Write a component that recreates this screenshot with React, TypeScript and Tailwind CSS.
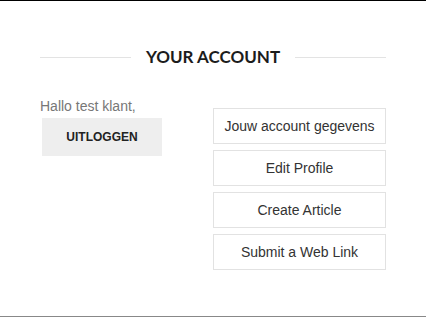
import React from "react";

export default function App() {
  const links = ["Jouw account gegevens", "Edit Profile", "Create Article", "Submit a Web Link"];
  return (
    <div className="w-[426px] h-[317px] bg-white border-t border-t-black border-b border-b-[#888888] box-border" style={{ fontFamily: '"Liberation Sans", Arial, sans-serif' }}>
      <div className="px-[40px] pt-[44px]">
        <div className="flex items-center">
          <div className="flex-1 h-px bg-[#e3e3e3] mt-[1px]" />
          <h2 className="px-[15px] text-[17px] leading-[24px] font-bold text-[#1c1c1c]" style={{ fontFamily: 'Lato, sans-serif' }}>
            YOUR ACCOUNT
          </h2>
          <div className="flex-1 h-px bg-[#e3e3e3] mt-[1px]" />
        </div>
        <div className="flex justify-between mt-[27px]">
          <div className="flex flex-col items-start">
            <div className="text-[14px] leading-[20px] text-[#777777]">Hallo test klant,</div>
            <button className="ml-[2px] mt-[2px] w-[120px] h-[38px] bg-[#eeeeee] text-[12px] font-bold text-[#222222] flex items-center justify-center">
              UITLOGGEN
            </button>
          </div>
          <div className="mt-[12px] flex flex-col gap-[6px] w-[173px]">
            {links.map((l) => (
              <div key={l} className="h-[36px] border border-[#e2e2e2] flex items-center justify-center text-[14px] text-[#333333]">
                {l}
              </div>
            ))}
          </div>
        </div>
      </div>
    </div>
  );
}
